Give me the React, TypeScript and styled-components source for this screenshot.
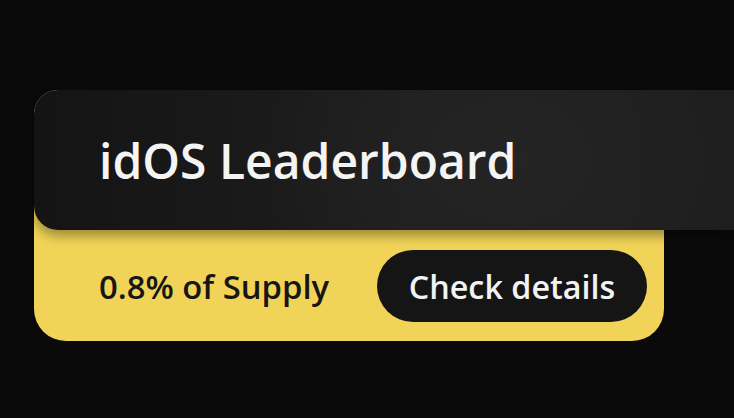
import React from "react";
import styled, { createGlobalStyle } from "styled-components";

const Global = createGlobalStyle`
  html, body {
    margin: 0;
    padding: 0;
    background: #0a0a0a;
    overflow: hidden;
  }
  body {
    font-family: "Open Sans", "Noto Sans", sans-serif;
  }
`;

const Page = styled.div`
  width: 734px;
  height: 418px;
  padding: 90px 0 0 34px;
  box-sizing: border-box;
  background: #0a0a0a;
  overflow: hidden;
`;

const Card = styled.div`
  width: 630px;
  background: #f1d457;
  border-radius: 24px 24px 32px 32px;
  display: flex;
  flex-direction: column;
`;

const Header = styled.div`
  height: 140px;
  margin-right: -70px;
  border-radius: 24px 0 0 24px;
  background: radial-gradient(ellipse 260px 180px at 480px 50%, #242424 0%, rgba(36,36,36,0) 100%),
    linear-gradient(90deg, #141414 0%, #1f1f1f 60%, #1d1d1d 100%);
  box-shadow: 0 6px 12px rgba(0, 0, 0, 0.35);
  display: flex;
  align-items: center;
  padding-left: 65px;
  position: relative;
  z-index: 1;
`;

const Title = styled.h1`
  margin: 0;
  font-family: "Open Sans", "Noto Sans", sans-serif;
  font-weight: 600;
  font-size: 48px;
  color: #f4f4f4;
  letter-spacing: 0;
`;

const Footer = styled.div`
  display: flex;
  align-items: center;
  justify-content: space-between;
  padding: 20px 17px 19px 65px;
`;

const Supply = styled.span`
  font-family: "Open Sans", "Noto Sans", sans-serif;
  font-weight: 600;
  font-size: 32.8px;
  color: #161616;
`;

const Button = styled.button`
  width: 270px;
  height: 72px;
  border: none;
  border-radius: 36px;
  background: #151515;
  color: #f2f2f2;
  font-family: "Open Sans", "Noto Sans", sans-serif;
  font-weight: 600;
  font-size: 32.3px;
  cursor: pointer;
  padding: 0;
`;

export default function App() {
  return (
    <>
      <Global />
      <Page>
        <Card>
          <Header>
            <Title>idOS Leaderboard</Title>
          </Header>
          <Footer>
            <Supply>0.8% of Supply</Supply>
            <Button>Check details</Button>
          </Footer>
        </Card>
      </Page>
    </>
  );
}
